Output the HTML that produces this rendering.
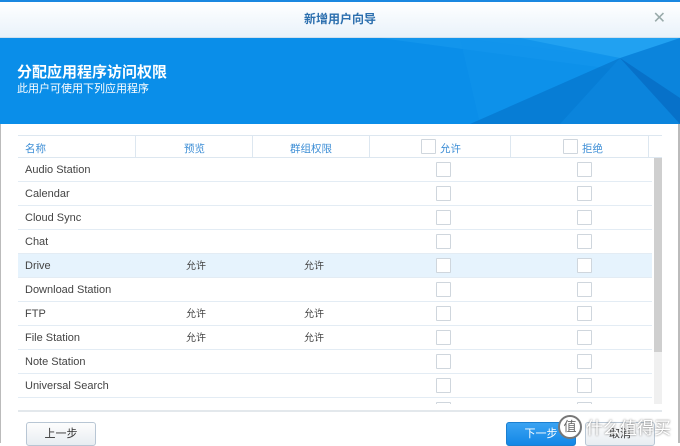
<!DOCTYPE html>
<html><head><meta charset="utf-8"><style>
*{margin:0;padding:0;box-sizing:border-box}
body{width:680px;height:443px;overflow:hidden;background:#fff;font-family:"Liberation Sans","Noto Sans CJK SC",sans-serif;position:relative}
.abs{position:absolute}
.title{left:0;top:0;width:680px;height:38px;background:linear-gradient(#fff,#e9f2fa);border-top:2px solid #1a87e0;border-bottom:1px solid #cfe0ee;text-align:center;font-size:12px;color:#2c6fae;line-height:34px;font-weight:bold}
.banner{left:0;top:38px;width:680px;height:86px;background:#0a8ee9;overflow:hidden}
.h1{left:17px;top:61px;color:#fff;font-size:15px;font-weight:bold}
.h2{left:17px;top:80px;color:#fff;font-size:11px}
.hd{top:135px;left:18px;width:644px;height:23px;border-top:1px solid #dde7f0;border-bottom:1px solid #dde7f0;font-size:10.5px;color:#3f8fd6}
.sep{position:absolute;top:0;width:1px;height:22px;background:#dde7f0}
.row{position:absolute;left:18px;width:634px;height:24px;border-bottom:1px solid #e3ecf4;font-size:11px;color:#444;line-height:25px}
.row span{position:absolute}
.cb{position:absolute;width:15px;height:15px;border:1px solid #cfd6dd;background:#fff;border-radius:1px}
.btn{top:422px;width:70px;height:24px;border:1px solid #b8c6d4;border-radius:3px;background:linear-gradient(#fdfdfd,#e8edf2);font-size:11px;color:#333;text-align:center;line-height:22px}
</style></head><body>
<div class="abs title">新增用户向导<span style="position:absolute;right:14px;top:0;color:#9aa;font-weight:normal;font-size:16px">✕</span></div>
<div class="abs banner">
<svg width="680" height="86" style="position:absolute;left:0;top:0">
<polygon points="380,0 680,0 680,40" fill="#1a9cf0" opacity=".5"/>
<polygon points="460,0 620,20 560,86 480,86" fill="#0f94ec" opacity=".5"/>
<polygon points="620,20 680,0 680,86 560,86" fill="#0b84dc"/>
<polygon points="620,20 560,86 470,86" fill="#0675cc" opacity=".7"/>
<polygon points="620,20 680,60 680,86" fill="#0564bc" opacity=".6"/>
<polygon points="520,0 620,20 680,0" fill="#30aef5" opacity=".5"/>
</svg></div>
<div class="abs h1">分配应用程序访问权限</div>
<div class="abs h2">此用户可使用下列应用程序</div>
<div class="abs" style="left:0;top:124px;width:1px;height:319px;background:#bbb"></div>
<div class="abs" style="left:678px;top:124px;width:2px;height:319px;background:#bbb"></div>
<div class="abs hd">
<span class="abs" style="left:7px;top:5px">名称</span>
<div class="sep" style="left:117px"></div>
<span class="abs" style="left:166px;top:5px">预览</span>
<div class="sep" style="left:234px"></div>
<span class="abs" style="left:272px;top:5px">群组权限</span>
<div class="sep" style="left:351px"></div>
<div class="cb" style="left:403px;top:3px"></div>
<span class="abs" style="left:422px;top:5px">允许</span>
<div class="sep" style="left:492px"></div>
<div class="cb" style="left:545px;top:3px"></div>
<span class="abs" style="left:564px;top:5px">拒绝</span>
<div class="sep" style="left:630px"></div>
</div>
<div class="row" style="top:158px"><span style="left:7px">Audio Station</span><div class="cb" style="left:418px;top:4px"></div><div class="cb" style="left:559px;top:4px"></div></div>
<div class="row" style="top:182px"><span style="left:7px">Calendar</span><div class="cb" style="left:418px;top:4px"></div><div class="cb" style="left:559px;top:4px"></div></div>
<div class="row" style="top:206px"><span style="left:7px">Cloud Sync</span><div class="cb" style="left:418px;top:4px"></div><div class="cb" style="left:559px;top:4px"></div></div>
<div class="row" style="top:230px"><span style="left:7px">Chat</span><div class="cb" style="left:418px;top:4px"></div><div class="cb" style="left:559px;top:4px"></div></div>
<div class="row" style="top:254px;background:#e6f3fd"><span style="left:7px">Drive</span><span style="left:168px;font-size:10px">允许</span><span style="left:286px;font-size:10px">允许</span><div class="cb" style="left:418px;top:4px"></div><div class="cb" style="left:559px;top:4px"></div></div>
<div class="row" style="top:278px"><span style="left:7px">Download Station</span><div class="cb" style="left:418px;top:4px"></div><div class="cb" style="left:559px;top:4px"></div></div>
<div class="row" style="top:302px"><span style="left:7px">FTP</span><span style="left:168px;font-size:10px">允许</span><span style="left:286px;font-size:10px">允许</span><div class="cb" style="left:418px;top:4px"></div><div class="cb" style="left:559px;top:4px"></div></div>
<div class="row" style="top:326px"><span style="left:7px">File Station</span><span style="left:168px;font-size:10px">允许</span><span style="left:286px;font-size:10px">允许</span><div class="cb" style="left:418px;top:4px"></div><div class="cb" style="left:559px;top:4px"></div></div>
<div class="row" style="top:350px"><span style="left:7px">Note Station</span><div class="cb" style="left:418px;top:4px"></div><div class="cb" style="left:559px;top:4px"></div></div>
<div class="row" style="top:374px"><span style="left:7px">Universal Search</span><div class="cb" style="left:418px;top:4px"></div><div class="cb" style="left:559px;top:4px"></div></div>
<div class="abs" style="left:18px;top:398px;width:634px;height:6px;overflow:hidden"><div class="cb" style="left:418px;top:4px"></div><div class="cb" style="left:559px;top:4px"></div></div>
<div class="abs" style="left:654px;top:158px;width:8px;height:246px;background:#f0f0f0"></div>
<div class="abs" style="left:654px;top:158px;width:8px;height:194px;background:#cfcfcf"></div>
<div class="abs" style="left:18px;top:410px;width:644px;height:2px;background:#e3e8ec"></div>
<div class="abs btn" style="left:26px">上一步</div>
<div class="abs btn" style="left:506px;background:linear-gradient(#3aa3f2,#1387e6);border-color:#1b7fd0;color:#fff">下一步</div>
<div class="abs btn" style="left:585px">取消</div>
<div class="abs" style="left:558px;top:415px;width:24px;height:24px;border-radius:50%;background:#fff;border:2px solid #777;font-size:13px;color:#666;text-align:center;line-height:20px">值</div>
<div class="abs" style="left:586px;top:414px;font-size:17px;color:#fff;text-shadow:0 0 2px #666">什么值得买</div>
</body></html>
